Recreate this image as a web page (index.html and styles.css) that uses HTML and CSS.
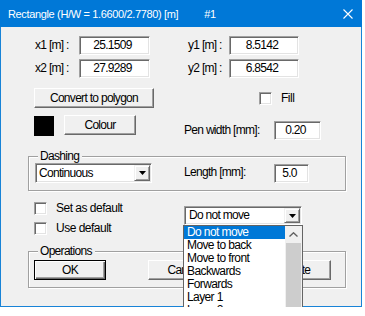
FILE: index.html
```html
<!DOCTYPE html>
<html lang="en">
<head>
  <meta charset="UTF-8" />
  <title>Rectangle</title>
  <link rel="stylesheet" href="styles.css">
</head>
<body>
  <div class="window">
    <div class="titlebar">
      <span class="title">Rectangle (H/W = 1.6600/2.7780) [m]</span>
      <span class="title-no">#1</span>
      <svg class="close" width="10" height="10" viewBox="0 0 10 10">
        <path d="M0.5 0.5 L9.5 9.5 M9.5 0.5 L0.5 9.5" stroke="#fff" stroke-width="1.1" fill="none" />
      </svg>
    </div>

    <div class="row coords">
      <span class="lbl lbl-x">x1 [m] :</span>
      <div class="field w-x">25.1509</div>
      <span class="lbl lbl-y">y1 [m] :</span>
      <div class="field w-y">8.5142</div>
    </div>
    <div class="row coords">
      <span class="lbl lbl-x">x2 [m] :</span>
      <div class="field w-x">27.9289</div>
      <span class="lbl lbl-y">y2 [m] :</span>
      <div class="field w-y">6.8542</div>
    </div>

    <div class="row convert-row">
      <button class="btn btn-convert">Convert to polygon</button>
      <label class="check check-fill"><span class="box"></span>Fill</label>
    </div>

    <div class="row colour-row">
      <span class="swatch"></span>
      <button class="btn btn-colour">Colour</button>
      <span class="lbl lbl-pen">Pen width [mm]:</span>
      <div class="field w-pen">0.20</div>
    </div>

    <div class="group group-dash">
      <div class="group-title">Dashing</div>
      <div class="row">
        <div class="combo combo-dash">
          <span class="combo-text">Continuous</span>
          <span class="combo-btn">
            <svg width="7" height="4" viewBox="0 0 7 4"><polygon points="0,0 7,0 3.5,4" fill="#000" /></svg>
          </span>
        </div>
        <span class="lbl lbl-len">Length [mm]:</span>
        <div class="field w-len">5.0</div>
      </div>
    </div>

    <div class="row defaults-row">
      <div class="checks">
        <label class="check"><span class="box"></span>Set as default</label>
        <label class="check"><span class="box"></span>Use default</label>
      </div>
      <div class="combo-wrap">
        <div class="combo combo-move">
          <span class="combo-text">Do not move</span>
          <span class="combo-btn">
            <svg width="7" height="4" viewBox="0 0 7 4"><polygon points="0,0 7,0 3.5,4" fill="#000" /></svg>
          </span>
        </div>
        <div class="droplist">
          <ul class="items">
            <li class="selected">Do not move</li>
            <li>Move to back</li>
            <li>Move to front</li>
            <li>Backwards</li>
            <li>Forwards</li>
            <li>Layer 1</li>
            <li>Layer 2</li>
            <li>Layer 3</li>
          </ul>
          <div class="scrollbar">
            <span class="sb-up">
              <svg width="9" height="5" viewBox="0 0 9 5"><polyline points="0.5,4.5 4.5,0.8 8.5,4.5" stroke="#606060" stroke-width="1.4" fill="none" /></svg>
            </span>
            <span class="sb-thumb"></span>
          </div>
        </div>
      </div>
    </div>

    <div class="group group-ops">
      <div class="group-title">Operations</div>
      <div class="row ops-row">
        <button class="btn btn-op btn-default">OK</button>
        <button class="btn btn-op btn-cancel">Cancel</button>
        <button class="btn btn-op btn-delete">Delete</button>
      </div>
    </div>
  </div>
</body>
</html>
```

FILE: styles.css
```css
* {
  box-sizing: border-box;
}
body {
  margin: 0;
  background: #fff;
  color: #000;
  font-family: "Liberation Sans", Arial, sans-serif;
  font-size: 12px;
  letter-spacing: -0.7px;
  overflow: hidden;
}
.window {
  width: 362px;
  height: 307px;
  background: #f0f0f0;
  border: 1px solid #1883d7;
  border-top: 0;
}
.titlebar {
  height: 27px;
  margin: 0 -1px;
  padding-left: 8px;
  background: #0078d7;
  color: #fff;
  display: flex;
  align-items: center;
  font-size: 11px;
  letter-spacing: -0.35px;
  white-space: nowrap;
}
.title-no {
  margin-left: 26px;
}
.close {
  margin-left: auto;
  margin-right: 9px;
}

.row {
  display: flex;
  align-items: flex-start;
}
.lbl {
  line-height: 19px;
  white-space: nowrap;
}

/* sunken edit box */
.field {
  height: 19px;
  line-height: 17px;
  background: #fff;
  border: 1px solid;
  border-color: #a0a0a0 #fff #fff #a0a0a0;
  box-shadow: inset 1px 1px 0 #696969, inset -1px -1px 0 #e3e3e3;
  text-align: center;
  padding-right: 4px;
}

.coords {
  margin-top: 9px;
}
.coords + .coords {
  margin-top: 4px;
}
.lbl-x { margin-left: 34px; width: 44px; }
.lbl-y { margin-left: 38px; width: 41px; }
.w-x { width: 71px; }
.w-y { width: 70px; }

/* raised button */
.btn {
  height: 20px;
  padding: 0;
  font: inherit;
  letter-spacing: inherit;
  color: #000;
  background: #f0f0f0;
  border: 1px solid;
  border-color: #fff #696969 #696969 #fff;
  box-shadow: inset -1px -1px 0 #a0a0a0;
}
.btn-default {
  border: 1px solid #000;
  box-shadow: inset 1px 1px 0 #fff, inset -1px -1px 0 #696969, inset -2px -2px 0 #a0a0a0;
}

.convert-row {
  margin-top: 10px;
}
.btn-convert {
  margin-left: 33px;
  width: 120px;
}

.check {
  display: flex;
  align-items: center;
  gap: 9px;
  line-height: 13px;
  white-space: nowrap;
  letter-spacing: -0.5px;
}
.box {
  width: 13px;
  height: 13px;
  background: #fff;
  border: 1px solid;
  border-color: #a0a0a0 #fff #fff #a0a0a0;
  box-shadow: inset 1px 1px 0 #696969, inset -1px -1px 0 #e3e3e3;
}
.check-fill {
  margin: 4px 0 0 105px;
}

.colour-row {
  margin-top: 7px;
}
.swatch {
  width: 20px;
  height: 20px;
  margin: 1px 0 0 33px;
  background: #000;
}
.btn-colour {
  margin-left: 10px;
  width: 72px;
}
.lbl-pen {
  margin: 6px 0 0 48px;
  width: 90px;
}
.w-pen {
  width: 47px;
  margin-top: 6px;
}

/* etched group box */
.group {
  margin: 16px 0 0 27px;
  width: 318px;
  border: 1px solid #a0a0a0;
  box-shadow: inset 1px 1px 0 #fff, 1px 1px 0 #fff;
}
.group-title {
  width: max-content;
  margin: -7px 0 0 9px;
  padding: 0 3px 0 2px;
  line-height: 13px;
  background: #f0f0f0;
}
.group-dash {
  height: 35px;
}
.group-ops {
  height: 37px;
}

.combo {
  height: 20px;
  display: flex;
  align-items: stretch;
  background: #fff;
  border: 1px solid;
  border-color: #a0a0a0 #fff #fff #a0a0a0;
  box-shadow: inset 1px 1px 0 #696969, inset -1px -1px 0 #e3e3e3;
  padding: 1px;
}
.combo-text {
  flex: 1;
  padding-left: 2px;
  line-height: 16px;
  white-space: nowrap;
}
.combo-btn {
  width: 16px;
  display: flex;
  align-items: center;
  justify-content: center;
  background: #f0f0f0;
  border: 1px solid;
  border-color: #f0f0f0 #696969 #696969 #f0f0f0;
  box-shadow: inset 1px 1px 0 #fff, inset -1px -1px 0 #a0a0a0;
}
.combo-dash {
  margin-left: 6px;
  width: 117px;
}
.lbl-len {
  margin-left: 32px;
  width: 90px;
}
.w-len {
  width: 35px;
  margin-top: 1px;
}

.defaults-row {
  margin-top: 11px;
}
.checks {
  margin-left: 33px;
  width: 150px;
  display: flex;
  flex-direction: column;
  gap: 7px;
}
.combo-wrap {
  position: relative;
  margin-top: 4px;
  width: 118px;
}
.combo-move {
  height: 19px;
}
.combo-move .combo-text {
  padding-left: 3px;
  line-height: 15px;
}

.droplist {
  position: absolute;
  left: -1px;
  top: 100%;
  width: 120px;
  height: 110px;
  display: flex;
  background: #fff;
  border: 1px solid #646464;
  letter-spacing: -0.6px;
}
.items {
  flex: 1;
  margin: 0;
  padding: 0;
  list-style: none;
}
.items li {
  height: 13px;
  line-height: 13px;
  padding-left: 3px;
  white-space: nowrap;
}
.items .selected {
  background: #0078d7;
  color: #fff;
}
.scrollbar {
  width: 17px;
  display: flex;
  flex-direction: column;
  background: #f0f0f0;
}
.sb-up {
  height: 17px;
  display: flex;
  align-items: center;
  justify-content: center;
}
.sb-thumb {
  flex: 1;
  margin: 0 1px;
  background: #cdcdcd;
}

.ops-row {
  margin: 2px 0 0 5px;
}
.btn-op {
  width: 72px;
}
.btn-cancel {
  margin-left: 42px;
}
.btn-delete {
  margin-left: 39px;
}
```
